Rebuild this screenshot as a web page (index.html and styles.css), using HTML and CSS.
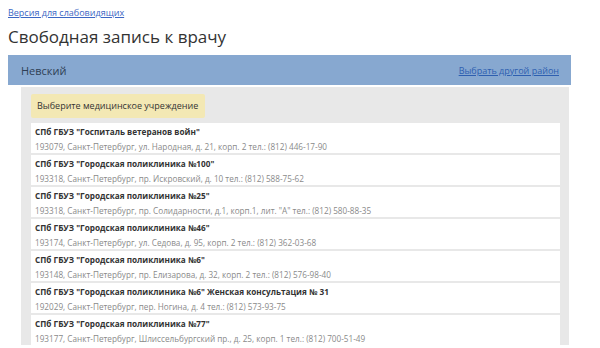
FILE: index.html
```html
<!DOCTYPE html>
<html lang="ru">
<head>
    <meta charset="UTF-8" />
    <title>Свободная запись к врачу</title>
    <link rel="stylesheet" href="styles.css">
</head>
<body>
    <a class="access" href="#">Версия для слабовидящих</a>
    <h1 class="title">Свободная запись к врачу</h1>

    <div class="district">
        <span class="district-name">Невский</span>
        <a class="district-change" href="#">Выбрать другой район</a>
    </div>

    <div class="panel">
        <div class="hint">Выберите медицинское учреждение</div>
        <div class="list">
            <div class="item">
                <div class="item-name">СПб ГБУЗ "Госпиталь ветеранов войн"</div>
                <div class="item-addr">193079, Санкт-Петербург, ул. Народная, д. 21, корп. 2 тел.: (812) 446-17-90</div>
            </div>
            <div class="item">
                <div class="item-name">СПб ГБУЗ "Городская поликлиника №100"</div>
                <div class="item-addr">193318, Санкт-Петербург, пр. Искровский, д. 10 тел.: (812) 588-75-62</div>
            </div>
            <div class="item">
                <div class="item-name">СПб ГБУЗ "Городская поликлиника №25"</div>
                <div class="item-addr">193318, Санкт-Петербург, пр. Солидарности, д.1, корп.1, лит. "А" тел.: (812) 580-88-35</div>
            </div>
            <div class="item">
                <div class="item-name">СПб ГБУЗ "Городская поликлиника №46"</div>
                <div class="item-addr">193174, Санкт-Петербург, ул. Седова, д. 95, корп. 2 тел.: (812) 362-03-68</div>
            </div>
            <div class="item">
                <div class="item-name">СПб ГБУЗ "Городская поликлиника №6"</div>
                <div class="item-addr">193148, Санкт-Петербург, пр. Елизарова, д. 32, корп. 2 тел.: (812) 576-98-40</div>
            </div>
            <div class="item">
                <div class="item-name">СПб ГБУЗ "Городская поликлиника №6" Женская консультация № 31</div>
                <div class="item-addr">192029, Санкт-Петербург, пер. Ногина, д. 4 тел.: (812) 573-93-75</div>
            </div>
            <div class="item">
                <div class="item-name">СПб ГБУЗ "Городская поликлиника №77"</div>
                <div class="item-addr">193177, Санкт-Петербург, Шлиссельбургский пр., д. 25, корп. 1 тел.: (812) 700-51-49</div>
            </div>
        </div>
    </div>
</body>
</html>
```

FILE: styles.css
```css
body {
    margin: 8px;
    background: #fff;
    font-family: 'Open Sans', 'DejaVu Sans', sans-serif;
    color: #333;
}

.access {
    display: block;
    font-size: 9px;
    line-height: 10px;
    color: #3b66c4;
}

.title {
    margin: 7px 0 0;
    font-size: 17px;
    line-height: 24px;
    font-weight: normal;
    color: #333;
}

.district {
    margin-top: 6px;
    width: 563px;
    height: 30px;
    box-sizing: border-box;
    padding: 0 12px 0 13px;
    background-color: #87a8d0;
    display: flex;
    align-items: center;
    justify-content: space-between;
}

.district-name {
    font-size: 11px;
    color: #2f3f55;
}

.district-change {
    font-size: 9px;
    color: #2e5fb0;
}

.panel {
    margin: 2px 0 0 13px;
    width: 548px;
    box-sizing: border-box;
    padding: 7px 9px 0 10px;
    background-color: #e8e8e8;
}

.hint {
    width: fit-content;
    padding: 6px 7px 6px 6px;
    font-size: 9px;
    line-height: 12px;
    color: #333;
    background-color: #f3e8b4;
    border-radius: 2px;
}

.list {
    margin-top: 5px;
    display: flex;
    flex-direction: column;
    gap: 2px;
}

.item {
    height: 30px;
    box-sizing: border-box;
    padding: 2px 4px 0;
    background-color: #fff;
}

.item-name {
    font-size: 8.2px;
    line-height: 14px;
    font-weight: bold;
    color: #333;
}

.item-addr {
    font-size: 8.2px;
    line-height: 15px;
    color: #8a8a8a;
}
```
